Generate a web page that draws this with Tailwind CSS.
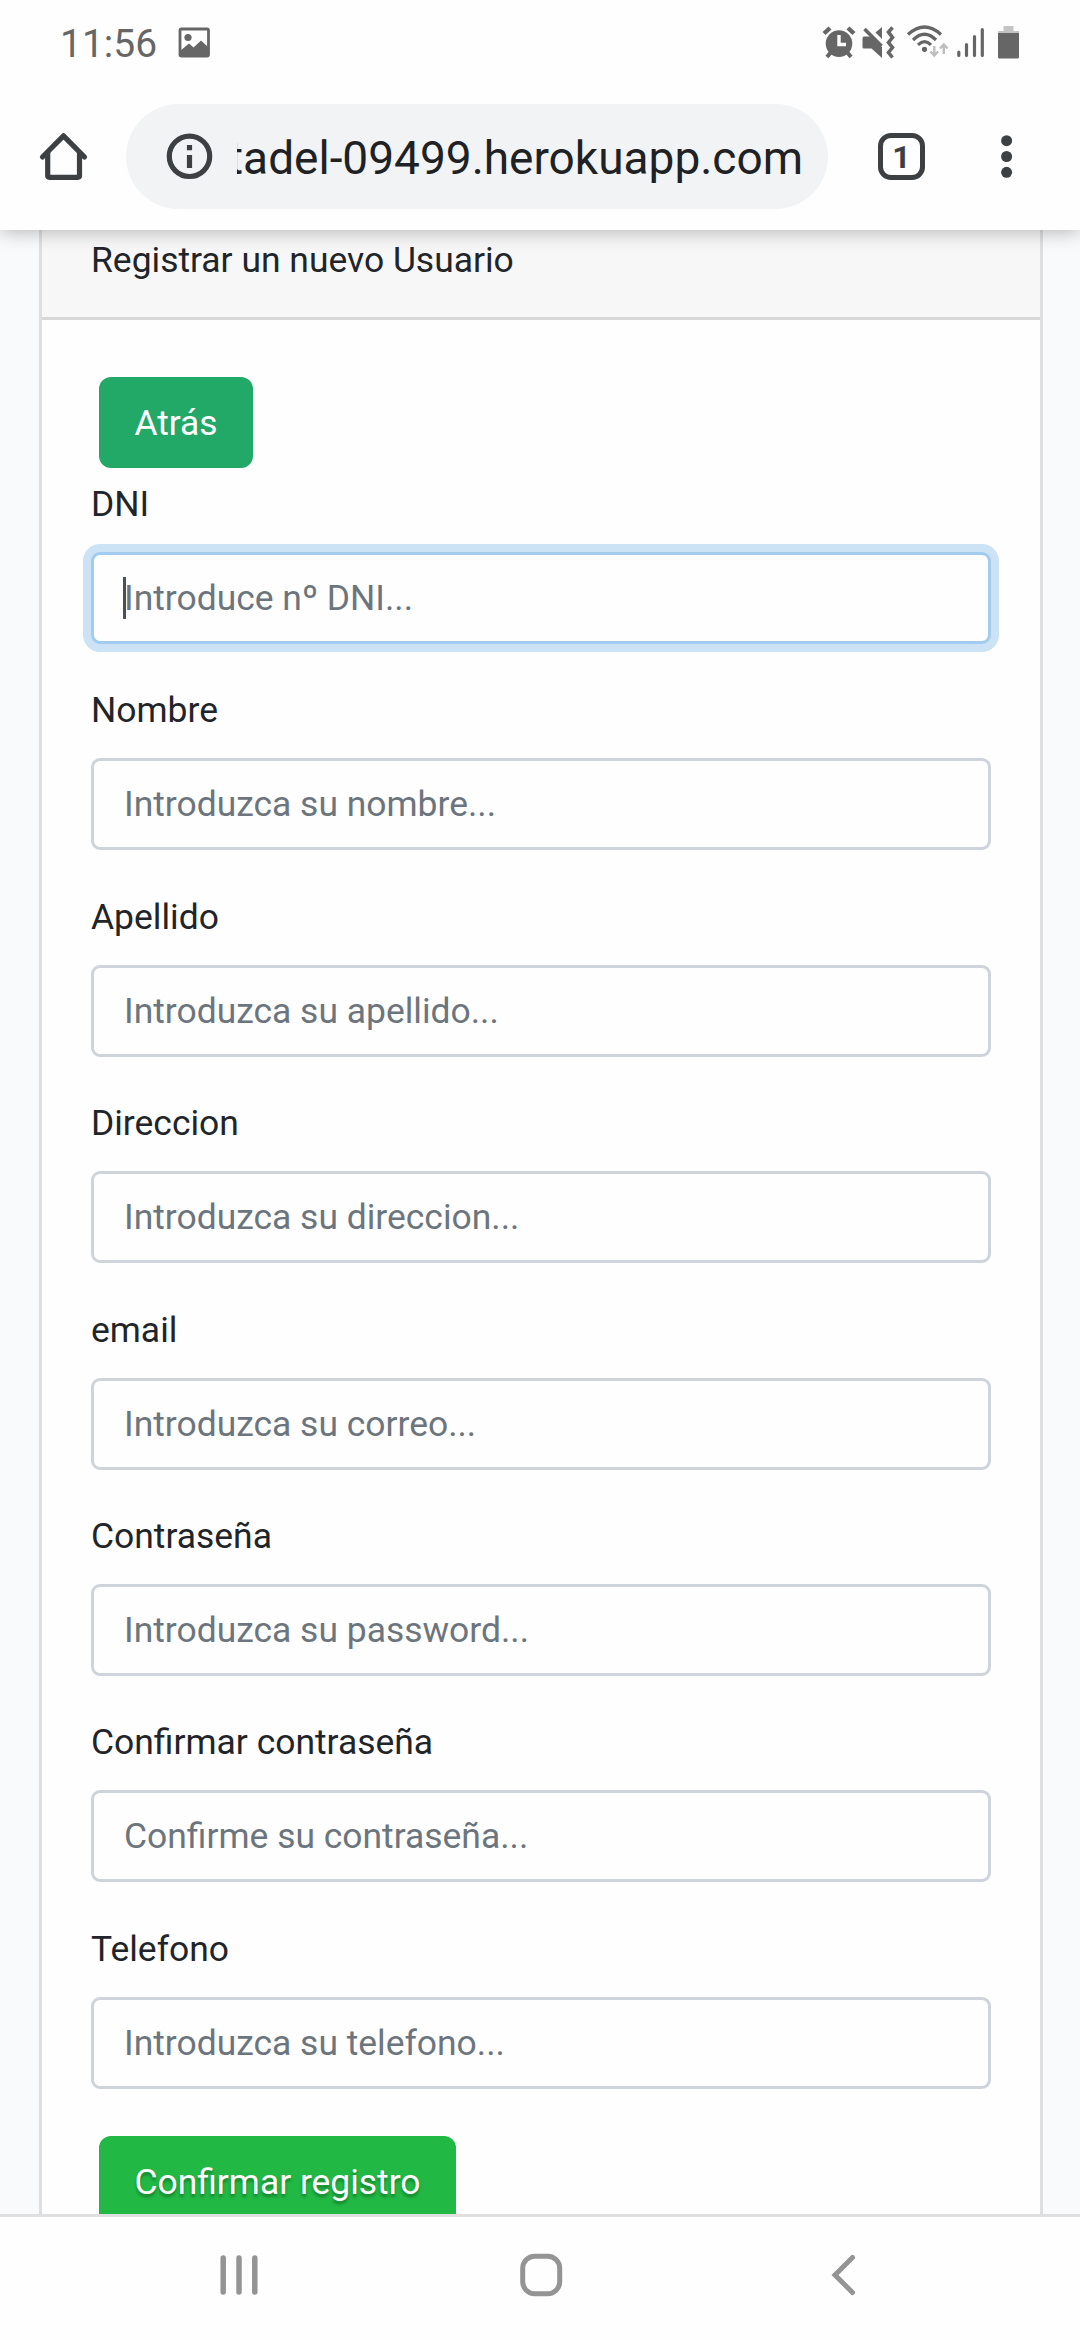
<!DOCTYPE html>
<html lang="es">
<head>
<meta charset="utf-8">
<title>Registrar un nuevo Usuario</title>
<script src="https://cdn.jsdelivr.net/npm/@tailwindcss/browser@4"></script>
</head>
<body class="w-[1080px] h-[2340px] overflow-hidden bg-[#fefefe] font-[Roboto,sans-serif] flex flex-col">

<!-- Status bar -->
<div class="h-[90px] shrink-0 flex items-start text-[#666]">
  <span class="ml-[60px] w-[112px] mt-[21px] text-[39px] leading-[46px]">11:56</span>
  <svg class="w-[44px] h-[70px]" viewBox="172 0 44 70" fill="none">
    <rect x="180" y="29" width="28.5" height="27" rx="1.5" stroke="#666" stroke-width="2.8"/>
    <circle cx="188" cy="37.5" r="3.6" fill="#666"/>
    <path d="M180 51 L189 43.5 L193.5 47.5 L201 40.5 L208 47 V56 H180Z" fill="#666"/>
  </svg>
  <div class="grow"></div>
  <svg class="w-[210px] h-[70px] mr-[54px]" viewBox="816 0 210 70" fill="none">
    <!-- alarm -->
    <circle cx="839" cy="43.6" r="13.3" fill="#666"/>
    <path d="M824 33.5 L830 28 M854 33.5 L848 28" stroke="#666" stroke-width="4.4"/>
    <path d="M831 52 L827 57 M847 52 L851 57" stroke="#666" stroke-width="4"/>
    <path d="M839 35 V44.5 H846" stroke="#fefefe" stroke-width="3.4"/>
    <!-- muted, vibrating -->
    <path d="M864 36.5 H871.5 L882 47 V58 L871.5 48.5 H864 Q862.5 48.5 862.5 47 V38 Q862.5 36.5 864 36.5Z" fill="#666"/>
    <path d="M864.5 29 L881.5 46" stroke="#666" stroke-width="3.6"/>
    <path d="M882 27 V39 L875.5 32.5Z" fill="#666"/>
    <path d="M892.5 27.5 L888.5 32 L892.5 37.5 L888.5 42.5 L892.5 47.5 L888.5 52.5 L892.5 57.5" stroke="#666" stroke-width="3.6"/>
    <!-- wifi -->
    <path d="M908 34.5 Q924.5 19.5 941 34.5 M913 40 Q924.5 28.5 936 40 M918 44.8 Q924.5 38.5 931 44.8" stroke="#666" stroke-width="3.2"/>
    <circle cx="924.5" cy="49.3" r="2.6" fill="#666"/>
    <path d="M934.3 46 V56 M930.5 51.5 L934.3 55.5 L938.1 51.5 M943.8 54 V44 M940 48.5 L943.8 44.5 L947.6 48.5" stroke="#bdbdbd" stroke-width="2.4"/>
    <!-- signal -->
    <path d="M958.8 52 V55.5 M966.5 44.5 V55.5 M974.5 36.5 V55.5 M982.3 29.5 V55.5" stroke="#666" stroke-width="3.2" stroke-linecap="round"/>
    <!-- battery -->
    <path d="M1003.5 26 H1013.5 V31 H1019 V34 H998 V31 H1003.5Z" fill="#c4c4c4"/>
    <path d="M998 33 H1019 V57 Q1019 58.5 1017.5 58.5 H999.5 Q998 58.5 998 57Z" fill="#666"/>
  </svg>
</div>

<!-- Browser toolbar -->
<header class="relative z-10 h-[140px] shrink-0 bg-[#fefefe] flex items-start pt-[14px] shadow-[0_2px_18px_rgba(0,0,0,0.27)] [clip-path:inset(0_0_-30px_0)]">
  <div class="w-[126px] h-[105px] flex items-center pl-[36px]">
    <svg class="w-[56px] h-[56px]" viewBox="36 129 56 56" fill="none" stroke="#3c4043" stroke-width="5.2" stroke-linecap="round" stroke-linejoin="round">
      <path d="M42.5 157 L63.5 135.8 L84.5 157" />
      <path d="M47.7 152 V175.5 Q47.7 177.3 49.5 177.3 H77.7 Q79.5 177.3 79.5 175.5 V152" stroke-linecap="butt"/>
    </svg>
  </div>
  <div class="w-[702px] h-[105px] rounded-full bg-[#f1f3f4] flex items-center">
    <svg class="ml-[37px] w-[53px] h-[53px] shrink-0" viewBox="163 130 53 53" fill="none">
      <circle cx="189.5" cy="156.3" r="20.2" stroke="#3c4043" stroke-width="5.2"/>
      <path d="M189.5 145 V150.3 M189.5 155 V168" stroke="#3c4043" stroke-width="5.2"/>
    </svg>
    <div class="ml-[21px] w-[566px] h-[64px] overflow-hidden flex justify-end">
      <span class="text-[46px] leading-[66px] text-[#202124] whitespace-nowrap">citadel-09499.herokuapp.com</span>
    </div>
  </div>
  <div class="ml-[50px] mt-[29px] w-[47px] h-[47px] rounded-[13px] border-[5px] border-[#3c4043] flex items-center justify-center text-[32px] leading-none font-bold text-[#3c4043]"><span>1</span></div>
  <svg class="ml-[71px] mt-[25px] w-[21px] h-[56px]" viewBox="996 129 21 56" fill="#3c4043">
    <circle cx="1006.6" cy="140.7" r="5.5"/><circle cx="1006.6" cy="156.5" r="5.5"/><circle cx="1006.6" cy="172.3" r="5.5"/>
  </svg>
</header>

<!-- Page -->
<main class="h-[1984px] shrink-0 overflow-hidden bg-[#f8fafc] px-[39px]">
  <section class="w-[1004px] h-full border-x-[3px] border-[#dfdfdf] bg-[#fefefe] text-[35.45px] leading-[57px] text-[#212529]">
    <h1 class="h-[90px] bg-[#f7f7f7] border-b-[3px] border-[#d8d8d8] pl-[49px] pt-[2px]">Registrar un nuevo Usuario</h1>
    <form class="pl-[49px] pr-[49px] pt-[57px]">
      <button type="button" class="block ml-[8px] w-[154px] h-[91px] rounded-[12px] bg-[#22a867] text-white text-[35.4px] pt-[2px]">Atrás</button>
      <div class="pt-[7px]">
        <div class="h-[206.4px]"><label class="block h-[77px] pt-px">DNI</label>
          <div class="relative h-[92px] rounded-[9px] border-[3px] border-[#a1cbef] bg-[#fefefe] shadow-[0_0_0_8px_#cce3f6] px-[30px] leading-[86px] text-[#6c757d]"><span class="absolute left-[29px] top-[22px] w-[3px] h-[42px] bg-[#495057]"></span>Introduce nº DNI...</div></div>
        <div class="h-[206.4px]"><label class="block h-[77px] pt-px">Nombre</label>
          <div class="h-[92px] rounded-[9px] border-[3px] border-[#ced4da] bg-[#fefefe] px-[30px] leading-[86px] text-[#6c757d]">Introduzca su nombre...</div></div>
        <div class="h-[206.4px]"><label class="block h-[77px] pt-px">Apellido</label>
          <div class="h-[92px] rounded-[9px] border-[3px] border-[#ced4da] bg-[#fefefe] px-[30px] leading-[86px] text-[#6c757d]">Introduzca su apellido...</div></div>
        <div class="h-[206.4px]"><label class="block h-[77px] pt-px">Direccion</label>
          <div class="h-[92px] rounded-[9px] border-[3px] border-[#ced4da] bg-[#fefefe] px-[30px] leading-[86px] text-[#6c757d]">Introduzca su direccion...</div></div>
        <div class="h-[206.4px]"><label class="block h-[77px] pt-px">email</label>
          <div class="h-[92px] rounded-[9px] border-[3px] border-[#ced4da] bg-[#fefefe] px-[30px] leading-[86px] text-[#6c757d]">Introduzca su correo...</div></div>
        <div class="h-[206.4px]"><label class="block h-[77px] pt-px">Contraseña</label>
          <div class="h-[92px] rounded-[9px] border-[3px] border-[#ced4da] bg-[#fefefe] px-[30px] leading-[86px] text-[#6c757d]">Introduzca su password...</div></div>
        <div class="h-[206.4px]"><label class="block h-[77px] pt-px">Confirmar contraseña</label>
          <div class="h-[92px] rounded-[9px] border-[3px] border-[#ced4da] bg-[#fefefe] px-[30px] leading-[86px] text-[#6c757d]">Confirme su contraseña...</div></div>
        <div class="h-[206.4px]"><label class="block h-[77px] pt-px">Telefono</label>
          <div class="h-[92px] rounded-[9px] border-[3px] border-[#ced4da] bg-[#fefefe] px-[30px] leading-[86px] text-[#6c757d]">Introduzca su telefono...</div></div>
      </div>
      <button type="button" class="block mt-[9.8px] ml-[8px] w-[357px] h-[91px] rounded-[12px] bg-[#21b843] text-white text-[35.4px] pt-[2px] whitespace-nowrap [text-shadow:0_3px_3px_rgba(0,0,0,0.3)]">Confirmar registro</button>
    </form>
  </section>
</main>

<!-- Navigation bar -->
<nav class="h-[126px] shrink-0 border-t-[3px] border-[#dfdfdf] bg-[#fefefe] flex pt-[33px]">
  <svg class="ml-[214px] w-[50px] h-[50px]" viewBox="214 2250 50 50" stroke="#949494" stroke-width="5.5" stroke-linecap="round"><path d="M223.2 2258 V2292 M239 2258 V2292 M254.8 2258 V2292"/></svg>
  <svg class="ml-[252px] w-[50px] h-[50px]" viewBox="516 2250 50 50" fill="none" stroke="#949494" stroke-width="5"><rect x="522.7" y="2256.3" width="37" height="37.4" rx="12"/></svg>
  <svg class="ml-[258px] w-[40px] h-[50px]" viewBox="824 2250 40 50" fill="none" stroke="#949494" stroke-width="5" stroke-linecap="round"><path d="M852.5 2257.5 L835 2275 L852.5 2292.5"/></svg>
</nav>
</body>
</html>
